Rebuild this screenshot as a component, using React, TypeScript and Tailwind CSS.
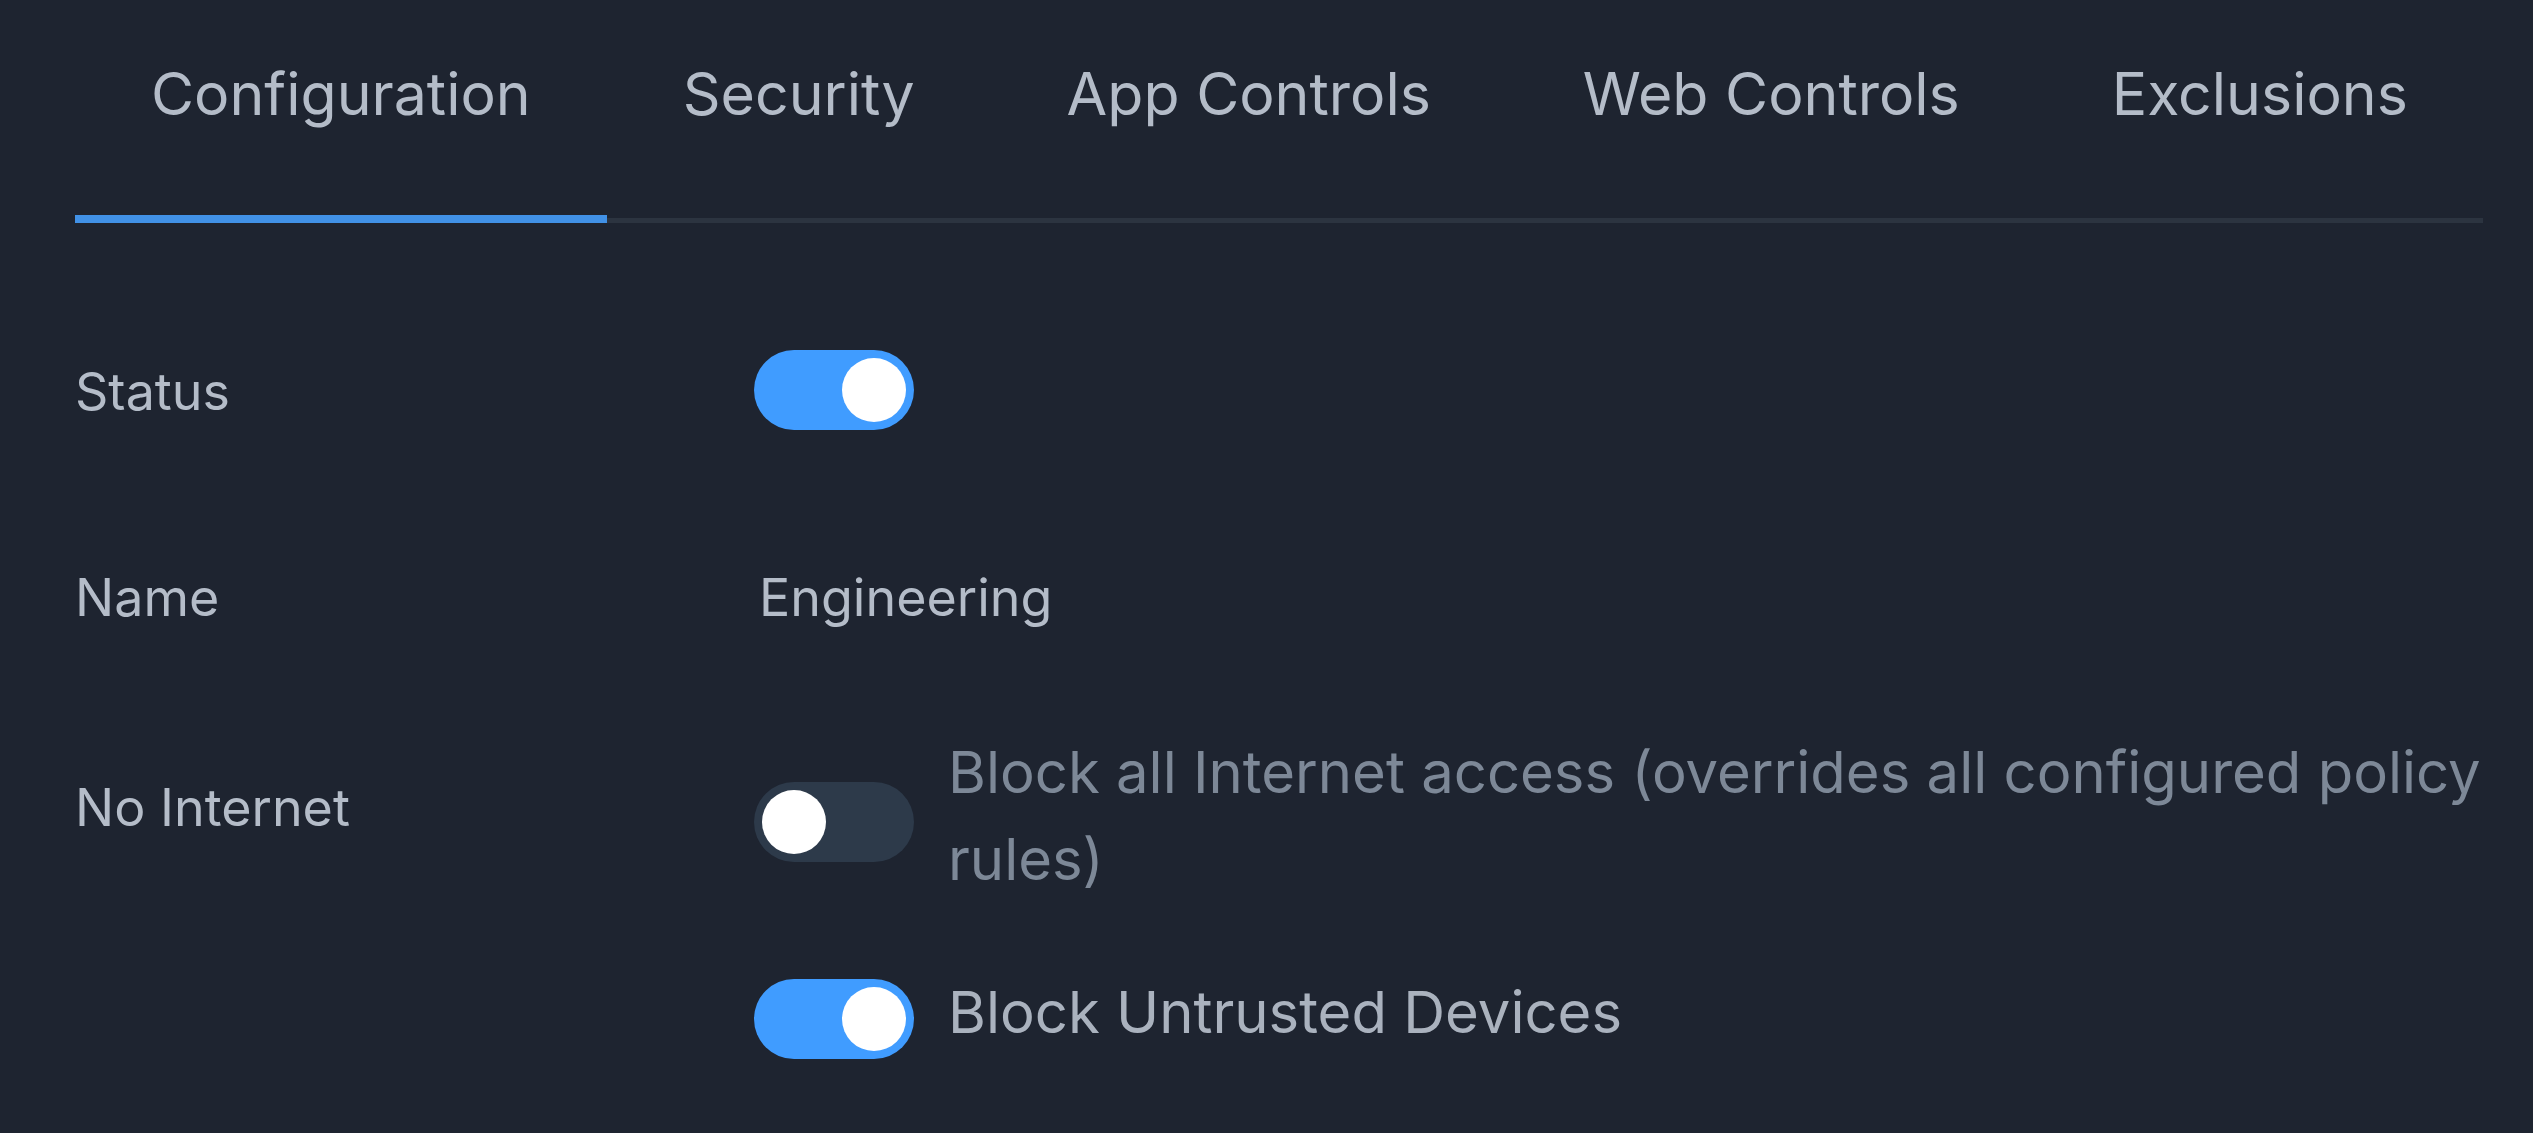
import { useState } from 'react';

const tabs = ['Configuration', 'Security', 'App Controls', 'Web Controls', 'Exclusions'];

function Toggle({ on, onChange }: { on: boolean; onChange: () => void }) {
  return (
    <button
      type="button"
      onClick={onChange}
      className={`flex h-[80px] w-[160px] shrink-0 items-center rounded-full p-[8px] ${on ? 'justify-end bg-[#409cff]' : 'justify-start bg-[#2d3a4a]'}`}
    >
      <span className="block h-[64px] w-[64px] rounded-full bg-white" />
    </button>
  );
}

export default function App() {
  const [active, setActive] = useState(0);
  const [status, setStatus] = useState(true);
  const [noInternet, setNoInternet] = useState(false);
  const [untrusted, setUntrusted] = useState(true);

  return (
    <div
      className="min-h-screen overflow-hidden bg-[#1e2430] pt-[50px] pl-[75px] pr-[50px] text-[#b4bcc8]"
      style={{ fontFamily: 'Inter, "Liberation Sans", sans-serif' }}
    >
      {/* Tabs */}
      <div className="flex border-b-[5px] border-[#2c3440] text-[59px] leading-[87px]">
        {tabs.map((t, i) => (
          <button
            key={t}
            type="button"
            onClick={() => setActive(i)}
            className={`-mb-[5px] shrink-0 whitespace-nowrap border-b-[8px] px-[76px] pb-[78px] ${i === active ? 'border-[#4191e6]' : 'border-transparent'}`}
          >
            {t}
          </button>
        ))}
      </div>

      {/* Status */}
      <div className="mt-[127px] flex items-start text-[52px] leading-[78px]">
        <div className="mt-[3px] w-[679px] shrink-0">Status</div>
        <Toggle on={status} onChange={() => setStatus(!status)} />
      </div>

      {/* Name */}
      <div className="mt-[128px] flex items-start text-[52px] leading-[78px]">
        <div className="w-[679px] shrink-0">Name</div>
        <div className="pl-[5px]">Engineering</div>
      </div>

      {/* No Internet */}
      <div className="mt-[92px] flex items-start">
        <div className="mt-[40px] w-[679px] shrink-0 text-[52px] leading-[78px]">No Internet</div>
        <div className="flex flex-col text-[58px] leading-[87px]">
          <div className="flex items-start gap-[34px]">
            <div className="mt-[53px]">
              <Toggle on={noInternet} onChange={() => setNoInternet(!noInternet)} />
            </div>
            <p className="text-[#7d8897]">Block all Internet access (overrides all configured policy rules)</p>
          </div>
          <div className="mt-[66px] flex items-start gap-[34px]">
            <div className="mt-[10px]">
              <Toggle on={untrusted} onChange={() => setUntrusted(!untrusted)} />
            </div>
            <p className="text-[#aab2be]">Block Untrusted Devices</p>
          </div>
        </div>
      </div>
    </div>
  );
}
